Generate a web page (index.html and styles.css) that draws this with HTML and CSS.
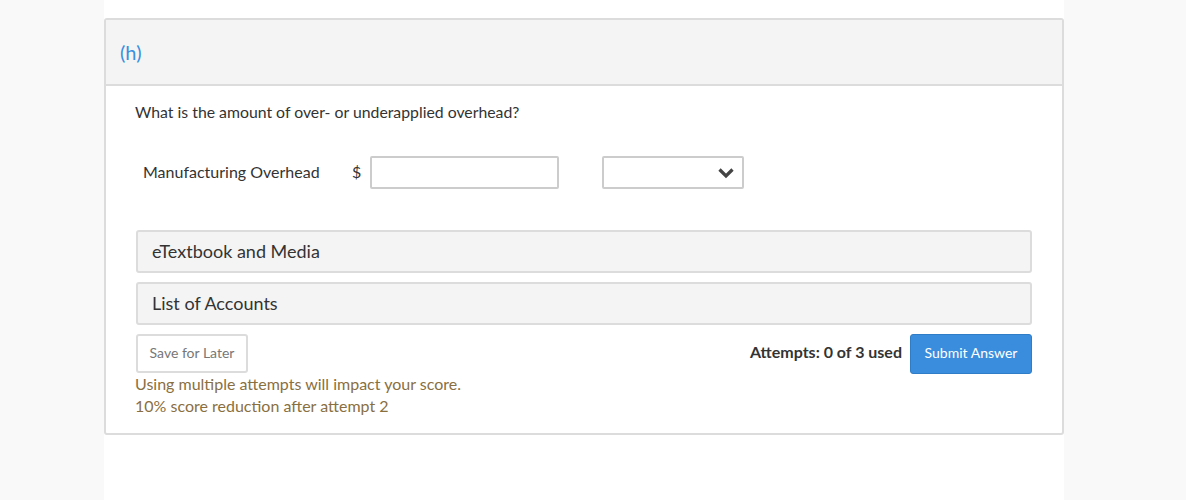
FILE: index.html
```html
<!DOCTYPE html>
<html>
<head>
<meta charset="utf-8">
<link rel="stylesheet" href="styles.css">
</head>
<body>
<div class="page">
  <div class="card">
    <div class="card-header">(h)</div>
    <div class="card-body">
      <p class="question">What is the amount of over- or underapplied overhead?</p>
      <div class="answer-row">
        <span class="label">Manufacturing Overhead</span>
        <span class="dollar">$</span>
        <span class="input"></span>
        <span class="select">
          <svg class="chev" viewBox="0 0 16 12" width="16" height="12"><path d="M1.5 2.5 L8 9 L14.5 2.5" fill="none" stroke="#444" stroke-width="3.2" stroke-linecap="butt" stroke-linejoin="miter"/></svg>
        </span>
      </div>
      <div class="panel">eTextbook and Media</div>
      <div class="panel">List of Accounts</div>
      <div class="actions">
        <button class="btn-save">Save for Later</button>
        <div class="right-actions">
          <span class="attempts">Attempts: 0 of 3 used</span>
          <button class="btn-submit">Submit Answer</button>
        </div>
      </div>
      <div class="warning">
        <div>Using multiple attempts will impact your score.</div>
        <div>10% score reduction after attempt 2</div>
      </div>
    </div>
  </div>
</div>
</body>
</html>
```

FILE: styles.css
```css
html, body {
  margin: 0;
  padding: 0;
}
body {
  background: #f9f9f9;
  font-family: Lato, "Liberation Sans", sans-serif;
  color: #333;
}
.page {
  width: 960px;
  margin-left: 104px;
  background: #fff;
  min-height: 500px;
  padding-top: 18px;
  box-sizing: border-box;
}
.card {
  border: 2px solid #dcdcdc;
  border-radius: 3px;
}
.card-header {
  background: #f4f4f4;
  height: 64px;
  border-bottom: 2px solid #dcdcdc;
  display: flex;
  align-items: center;
  padding-left: 14px;
  font-size: 20px;
  color: #3a8ee0;
}
.card-body {
  padding: 16px 30px 16px 30px;
}
.question {
  margin: 0;
  font-size: 15.8px;
  line-height: 20px;
  margin-left: -1px;
}
.answer-row {
  display: flex;
  align-items: center;
  margin-top: 34px;
  padding-left: 7px;
  font-size: 16px;
}
.label {
  width: 209px;
  padding-bottom: 2px;
}
.dollar {
  width: 18px;
  padding-bottom: 2px;
}
.input {
  width: 189px;
  height: 33px;
  border: 2px solid #ccc;
  box-sizing: border-box;
  border-radius: 2px;
}
.select {
  margin-left: 43px;
  width: 142px;
  height: 33px;
  border: 2px solid #ccc;
  border-radius: 2px;
  box-sizing: border-box;
  display: flex;
  align-items: center;
  justify-content: flex-end;
  padding-right: 8px;
}
.chev {
  display: block;
}
.panel {
  margin-top: 9px;
  height: 43px;
  box-sizing: border-box;
  border: 2px solid #dcdcdc;
  border-radius: 3px;
  background: #f4f4f4;
  display: flex;
  align-items: center;
  padding-left: 14px;
  padding-bottom: 2px;
  font-size: 18px;
  color: #333;
}
.answer-row + .panel {
  margin-top: 41px;
}
.actions {
  margin-top: 9px;
  display: flex;
  justify-content: space-between;
  align-items: flex-start;
}
.btn-save {
  width: 112px;
  height: 39px;
  border: 2px solid #dcdcdc;
  border-radius: 3px;
  background: #fff;
  font-family: Lato, "Liberation Sans", sans-serif;
  font-size: 14px;
  color: #777;
  padding: 0 0 3px 0;
}
.right-actions {
  display: flex;
  align-items: center;
}
.attempts {
  font-weight: bold;
  font-size: 16px;
  color: #333;
  margin-right: 8px;
  margin-bottom: 5px;
}
.btn-submit {
  width: 122px;
  height: 40px;
  border: 1px solid #2f7dc6;
  border-radius: 3px;
  background: #3a8ddd;
  color: #fff;
  font-family: Lato, "Liberation Sans", sans-serif;
  font-size: 14px;
  padding: 0 0 4px 0;
}
.warning {
  font-size: 16px;
  line-height: 22px;
  color: #8a6f3f;
  margin-left: -1px;
  margin-top: -1px;
}
```
